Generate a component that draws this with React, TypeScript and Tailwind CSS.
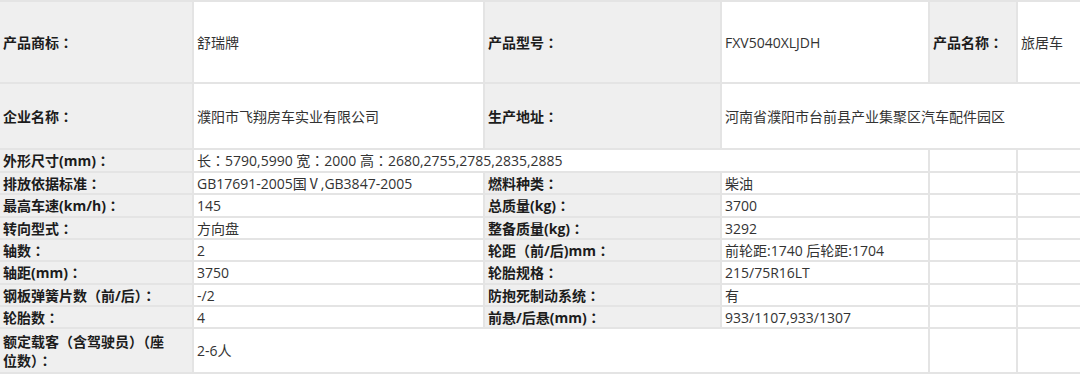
import type { ReactNode } from "react";

type CellProps = {
  children?: ReactNode;
  span?: string;
};

// the reference font centres its full-width colon; the SC face doesn't
function Colon() {
  return <span className="font-[family-name:'Noto_Sans_CJK_JP',sans-serif]">：</span>;
}

function withColons(text: string) {
  const parts = text.split("：");
  return parts.map((p, i) => (
    <span key={i}>
      {p}
      {i < parts.length - 1 && <Colon />}
    </span>
  ));
}

// gray label cell
function Label({ children, span = "" }: CellProps) {
  return (
    <div className={`flex items-center bg-[#efefef] px-[3px] text-[14px] leading-[19px] font-bold text-[#1c1c1c] ${span}`}>
      <span>{typeof children === "string" ? withColons(children) : children}</span>
    </div>
  );
}

// white value cell
function Value({ children, span = "" }: CellProps) {
  return (
    <div className={`flex items-center bg-white px-[3px] text-[14px] leading-[19px] text-[#333333] ${span}`}>
      <span>{typeof children === "string" ? withColons(children) : children}</span>
    </div>
  );
}

const specRows: [string, string, string, string][] = [
  ["排放依据标准：", "GB17691-2005国Ⅴ,GB3847-2005", "燃料种类：", "柴油"],
  ["最高车速(km/h)：", "145", "总质量(kg)：", "3700"],
  ["转向型式：", "方向盘", "整备质量(kg)：", "3292"],
  ["轴数：", "2", "轮距（前/后)mm：", "前轮距:1740 后轮距:1704"],
  ["轴距(mm)：", "3750", "轮胎规格：", "215/75R16LT"],
  ["钢板弹簧片数（前/后）：", "-/2", "防抱死制动系统：", "有"],
  ["轮胎数：", "4", "前悬/后悬(mm)：", "933/1107,933/1307"],
];

export default function App() {
  return (
    <div className="h-[374px] w-[1080px] overflow-hidden bg-white font-[family-name:'Open_Sans','Noto_Sans_CJK_SC',sans-serif]">
      <div className="grid grid-cols-[192px_289px_235px_206px_86px_62px] grid-rows-[80px_64px_21px_20px_21px_20px_20px_21px_20px_20px_43px] gap-[2px] bg-[#e4e4e4] py-[2px]">
        <Label>产品商标：</Label>
        <Value>舒瑞牌</Value>
        <Label>产品型号：</Label>
        <Value>FXV5040XLJDH</Value>
        <Label>产品名称：</Label>
        <Value>旅居车</Value>

        <Label>企业名称：</Label>
        <Value>濮阳市飞翔房车实业有限公司</Value>
        <Label>生产地址：</Label>
        <Value span="col-span-3">河南省濮阳市台前县产业集聚区汽车配件园区</Value>

        <Label>外形尺寸(mm)：</Label>
        <Value span="col-span-3">长：5790,5990 宽：2000 高：2680,2755,2785,2835,2885</Value>
        <Value />
        <Value />

        {specRows.map(([l1, v1, l2, v2]) => (
          <div key={l1} className="contents">
            <Label>{l1}</Label>
            <Value>{v1}</Value>
            <Label>{l2}</Label>
            <Value>{v2}</Value>
            <Value />
            <Value />
          </div>
        ))}

        <Label>
          额定载客（含驾驶员）（座
          <br />
          位数）
          <Colon />
        </Label>
        <Value span="col-span-3">2-6人</Value>
        <Value />
        <Value />
      </div>
    </div>
  );
}
